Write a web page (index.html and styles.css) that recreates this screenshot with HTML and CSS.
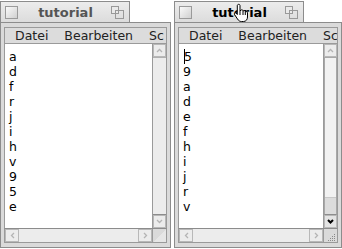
FILE: index.html
```html
<!DOCTYPE html>
<html lang="de">
<head>
    <meta charset="UTF-8">
    <title>tutorial</title>
    <link rel="stylesheet" href="styles.css">
</head>
<body>
    <div class="window">
        <div class="tab">
            <span class="close"></span>
            <span class="title">tutorial</span>
            <span class="zoom"><i></i><b></b></span>
        </div>
        <div class="frame">
            <div class="menubar">
                <span>Datei</span>
                <span>Bearbeiten</span>
                <span>Sc</span>
            </div>
            <div class="body">
                <ul class="list">
                    <li>a</li><li>d</li><li>f</li><li>r</li><li>j</li><li>i</li>
                    <li>h</li><li>v</li><li>9</li><li>5</li><li>e</li>
                </ul>
                <div class="vscroll">
                    <div class="arrow"><svg width="7" height="5" viewBox="0 0 7 5"><path d="M1 4 L3.5 1.5 L6 4" /></svg></div>
                    <div class="track"></div>
                    <div class="arrow"><svg width="7" height="5" viewBox="0 0 7 5"><path d="M1 1 L3.5 3.5 L6 1" /></svg></div>
                </div>
            </div>
            <div class="hrow">
                <div class="hscroll">
                    <div class="arrow"><svg width="5" height="7" viewBox="0 0 5 7"><path d="M4 1 L1.5 3.5 L4 6" /></svg></div>
                    <div class="track"></div>
                    <div class="arrow"><svg width="5" height="7" viewBox="0 0 5 7"><path d="M1 1 L3.5 3.5 L1 6" /></svg></div>
                </div>
                <div class="corner"></div>
            </div>
        </div>
    </div>

    <div class="window active">
        <div class="tab">
            <span class="close"></span>
            <span class="title">tutorial</span>
            <span class="zoom"><i></i><b></b></span>
            <svg class="hand" width="18" height="20" viewBox="0 0 18 20">
                <path d="M5 1.5 C6 1 7 1.5 7 2.5 L7 8 L8 7 C9 6.5 10 7 10 8 L10.5 7.8 C11.5 7.3 12.3 8 12.3 8.8 L12.8 8.7 C13.8 8.4 14.5 9 14.5 10 L14.5 14 C14.5 16.5 13 18.5 10.5 18.5 L8.5 18.5 C6.5 18.5 5.5 17.5 4.5 16 L1.5 11.5 C1 10.5 2 9.5 3 10 L4.3 11.5 L4.3 2.5 C4.3 2 4.6 1.7 5 1.5 Z" fill="#fff" stroke="#000" stroke-width="1"/>
                <path d="M7 8 L7 12 M10 8 L10 12 M12.3 9 L12.3 12" stroke="#000" stroke-width="1" fill="none"/>
            </svg>
        </div>
        <div class="frame">
            <div class="menubar">
                <span>Datei</span>
                <span>Bearbeiten</span>
                <span>Sc</span>
            </div>
            <div class="body">
                <ul class="list">
                    <li class="caret">5</li><li>9</li><li>a</li><li>d</li><li>e</li><li>f</li>
                    <li>h</li><li>i</li><li>j</li><li>r</li><li>v</li>
                </ul>
                <div class="vscroll">
                    <div class="arrow"><svg width="7" height="5" viewBox="0 0 7 5"><path d="M1 4 L3.5 1.5 L6 4" /></svg></div>
                    <div class="track">
                        <div class="thumb"></div>
                    </div>
                    <div class="arrow on"><svg width="7" height="5" viewBox="0 0 7 5"><path d="M1 1 L3.5 3.5 L6 1" /></svg></div>
                </div>
            </div>
            <div class="hrow">
                <div class="hscroll">
                    <div class="arrow"><svg width="5" height="7" viewBox="0 0 5 7"><path d="M4 1 L1.5 3.5 L4 6" /></svg></div>
                    <div class="track"></div>
                    <div class="arrow"><svg width="5" height="7" viewBox="0 0 5 7"><path d="M1 1 L3.5 3.5 L1 6" /></svg></div>
                </div>
                <div class="corner grip">
                    <svg width="13" height="13" viewBox="0 0 13 13">
                        <g fill="#8a8a8a">
                            <rect x="10" y="3" width="1" height="1"/>
                            <rect x="8" y="5" width="1" height="1"/><rect x="10" y="5" width="1" height="1"/>
                            <rect x="6" y="7" width="1" height="1"/><rect x="8" y="7" width="1" height="1"/><rect x="10" y="7" width="1" height="1"/>
                            <rect x="4" y="9" width="1" height="1"/><rect x="6" y="9" width="1" height="1"/><rect x="8" y="9" width="1" height="1"/><rect x="10" y="9" width="1" height="1"/>
                        </g>
                    </svg>
                </div>
            </div>
        </div>
    </div>
</body>
</html>
```

FILE: styles.css
```css
body {
    margin: 0;
    display: flex;
    gap: 2px;
    font-family: "DejaVu Sans", sans-serif;
    background-color: #fff;
}
.window {
    display: flex;
    flex-direction: column;
    width: 171px;
    height: 248px;
}
.window.active {
    width: 168px;
    margin-left: 1px;
}
.tab {
    position: relative;
    width: 124px;
    height: 20px;
    margin-top: 1px;
    border: 1px solid #8c8c8c;
    border-bottom: none;
    background: linear-gradient(#ececec, #dcdcdc);
    display: flex;
    align-items: center;
    padding-left: 4px;
    box-sizing: content-box;
}
.close {
    width: 11px;
    height: 11px;
    border: 1px solid #9a9a9a;
    background: linear-gradient(135deg, #fafafa, #d0d0d0);
}
.title {
    flex: 1;
    text-align: center;
    font-size: 13px;
    font-weight: bold;
    color: #555;
    padding-left: 2px;
}
.active .title {
    color: #000;
}
.zoom {
    position: relative;
    width: 13px;
    height: 13px;
    margin-right: 5px;
}
.zoom i,
.zoom b {
    position: absolute;
    border: 1px solid #999;
    background: #eaeaea;
}
.zoom i {
    left: 0;
    top: 0;
    width: 6px;
    height: 6px;
}
.zoom b {
    left: 4px;
    top: 4px;
    width: 7px;
    height: 7px;
    background: transparent;
}
.hand {
    position: absolute;
    left: 58px;
    top: 1px;
}
.frame {
    flex: 1;
    border: 1px solid #8c8c8c;
    background: #dadada;
    padding: 4px 3px 4px 3px;
    display: flex;
    flex-direction: column;
}
.menubar {
    height: 15px;
    border: 1px solid #9a9a9a;
    background: #dcdcdc;
    display: flex;
    align-items: center;
    font-size: 12.5px;
    color: #222;
    padding-left: 10px;
    gap: 16px;
    white-space: nowrap;
    overflow: hidden;
}
.body {
    flex: 1;
    display: flex;
    border-left: 1px solid #9a9a9a;
    border-right: 1px solid #9a9a9a;
}
.list {
    flex: 1;
    margin: 0;
    padding: 5px 0 0 4px;
    list-style: none;
    background: #fff;
    font-size: 12.5px;
    line-height: 15px;
    color: #000;
}
.caret {
    border-left: 1px solid #000;
    margin-left: 1px;
    width: fit-content;
    text-indent: -1px;
}
.vscroll {
    width: 13px;
    border-left: 1px solid #9a9a9a;
    display: flex;
    flex-direction: column;
    background: #ececec;
}
.arrow {
    height: 13px;
    width: 13px;
    border: 1px solid #b8b8b8;
    box-sizing: border-box;
    background: #ececec;
    display: flex;
    align-items: center;
    justify-content: center;
}
.arrow svg path {
    fill: none;
    stroke: #b4b4b4;
    stroke-width: 1.3;
}
.arrow.on {
    background: #e4e4e4;
}
.arrow.on svg path {
    stroke: #000;
    stroke-width: 2;
}
.vscroll .track {
    flex: 1;
    display: flex;
    flex-direction: column;
    justify-content: flex-end;
    border-top: 1px solid #b0b0b0;
    border-bottom: 1px solid #8c8c8c;
}
.active .vscroll .track {
    background: #f2f2f2;
    border: 1px solid #a8a8a8;
    border-bottom-color: #8c8c8c;
}
.thumb {
    height: 16px;
    background: #dcdcdc;
    border-top: 1px solid #c8c8c8;
}
.hrow {
    height: 13px;
    display: flex;
    border: 1px solid #9a9a9a;
    border-top: 1px solid #8c8c8c;
}
.hscroll {
    flex: 1;
    display: flex;
    background: #ececec;
    border-right: 1px solid #9a9a9a;
}
.hscroll .arrow {
    height: 13px;
    width: 14px;
}
.hscroll .track {
    flex: 1;
}
.corner {
    width: 13px;
    background: linear-gradient(135deg, #dadada 50%, #e6e6e6 50%);
}
.corner.grip {
    background: #dadada;
}
```
